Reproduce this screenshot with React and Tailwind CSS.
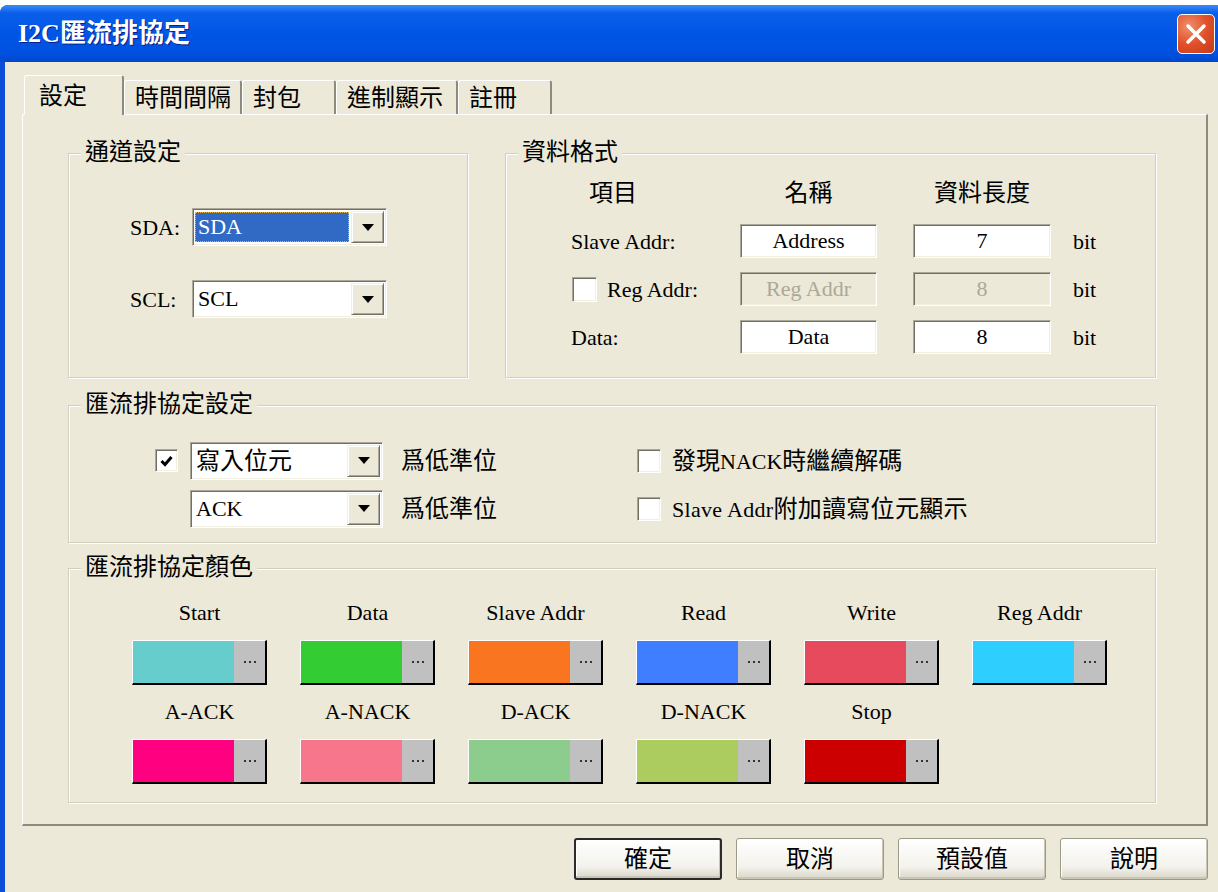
import React from 'react';

const sunken =
  'border border-t-[#ACA899] border-l-[#ACA899] border-b-white border-r-white shadow-[inset_1px_1px_0_#716F64,inset_-1px_-1px_0_#F1EFE2]';
const raised =
  'border border-t-[#F1EFE2] border-l-[#F1EFE2] border-b-[#716F64] border-r-[#716F64] shadow-[inset_1px_1px_0_#fff,inset_-1px_-1px_0_#ACA899]';

const C = ({ children }) => <span className="text-[24px]">{children}</span>;

const Group = ({ title, className, children }) => (
  <div className={`relative border border-[#D0D0BF] shadow-[inset_1px_1px_0_#fff,1px_1px_0_#fff] ${className}`}>
    <span className="absolute -top-[15px] left-[12px] bg-[#ECE9D8] px-[4px] text-[24px] leading-[26px]">{title}</span>
    {children}
  </div>
);

const Combo = ({ children, selected, className = '' }) => (
  <div className={`flex h-[38px] bg-white p-[2px] ${sunken} ${className}`}>
    <div
      className={`flex flex-1 items-center pl-[3px] leading-none ${
        selected ? 'mr-[2px] my-[1px] bg-[#316AC5] text-white outline-1 outline-dotted outline-[#E8B84A] -outline-offset-1' : ''
      }`}
    >
      {children}
    </div>
    <div className={`flex w-[33px] items-center justify-center bg-[#ECE9D8] ${raised}`}>
      <svg width="12" height="7" viewBox="0 0 12 7">
        <path d="M0 0h12L6 7z" fill="#000" />
      </svg>
    </div>
  </div>
);

const Field = ({ children, disabled, className = '' }) => (
  <div
    className={`flex h-full items-center justify-center leading-none ${sunken} ${
      disabled ? 'bg-[#ECE9D8] text-[#ACA899]' : 'bg-white'
    } ${className}`}
  >
    {children}
  </div>
);

const Check = ({ checked, className = '' }) => (
  <div className={`flex items-center justify-center bg-white ${sunken} ${className}`}>
    {checked && (
      <svg width="13" height="12" viewBox="0 0 13 12">
        <path d="M1.5 6 L5 9.5 L11.5 2" stroke="#000" strokeWidth="3" fill="none" />
      </svg>
    )}
  </div>
);

const colors = [
  { name: 'Start', color: 'bg-[#66CCCC]' },
  { name: 'Data', color: 'bg-[#33CC33]' },
  { name: 'Slave Addr', color: 'bg-[#F97520]' },
  { name: 'Read', color: 'bg-[#3F7FFF]' },
  { name: 'Write', color: 'bg-[#E64A5C]' },
  { name: 'Reg Addr', color: 'bg-[#2ECFFF]' },
  { name: 'A-ACK', color: 'bg-[#FF0080]' },
  { name: 'A-NACK', color: 'bg-[#F8768C]' },
  { name: 'D-ACK', color: 'bg-[#8CCC8C]' },
  { name: 'D-NACK', color: 'bg-[#ADCC60]' },
  { name: 'Stop', color: 'bg-[#CC0000]' },
];

const tabs = [
  { label: '時間間隔', w: 'w-[118px]' },
  { label: '封包', w: 'w-[94px]' },
  { label: '進制顯示', w: 'w-[122px]' },
  { label: '註冊', w: 'w-[94px]' },
];

const buttons = ['確定', '取消', '預設值', '說明'];

export default function App() {
  return (
    <div className="h-[892px] w-[1218px] overflow-hidden bg-white font-['Liberation_Serif','Noto_Sans_CJK_TC',serif] text-[22px] text-black">
      <div className="mt-[5px] flex h-[887px] flex-col overflow-hidden rounded-tl-[8px] bg-[#0B4FD9]">
        {/* title bar */}
        <div className="flex h-[57px] items-center justify-between bg-[linear-gradient(to_bottom,#3A8CF7_0%,#0A5FEA_14%,#0055E5_50%,#0051E0_86%,#0046CC_100%)] pl-[18px] pr-[3px]">
          <span className="text-[26px] font-bold text-white [text-shadow:1px_1px_0_#0A1E8C]">I2C匯流排協定</span>
          <div className="flex h-[40px] w-[38px] items-center justify-center rounded-[5px] border border-white bg-[radial-gradient(circle_at_30%_30%,#F0906E,#E0502A_50%,#C43A18)]">
            <svg width="22" height="22" viewBox="0 0 22 22">
              <path d="M3 3 L19 19 M19 3 L3 19" stroke="#fff" strokeWidth="3.5" strokeLinecap="round" />
            </svg>
          </div>
        </div>

        <div className="ml-[5px] flex flex-1 flex-col bg-[#ECE9D8] pl-[17px] pr-[10px] pt-[13px]">
          {/* tabs */}
          <div className="flex h-[39px] items-end">
            <div className="relative z-10 -mb-px ml-[2px] flex h-[40px] w-[100px] items-center rounded-t-[3px] border-l border-r-2 border-t border-l-white border-r-[#8d8b7e] border-t-white bg-[#ECE9D8] pl-[14px] text-[24px]">
              設定
            </div>
            {tabs.map((t) => (
              <div
                key={t.label}
                className={`flex h-[34px] items-center rounded-t-[3px] border-l border-r-2 border-t border-l-white border-r-[#8d8b7e] border-t-white pl-[10px] text-[24px] ${t.w}`}
              >
                {t.label}
              </div>
            ))}
          </div>

          {/* pane */}
          <div className="flex h-[712px] flex-col border-b-2 border-l border-r-2 border-t border-b-[#8d8b7e] border-l-white border-r-[#8d8b7e] border-t-white pl-[45px] pr-[50px] pt-[38px]">
            <div className="flex h-[225px] gap-[37px]">
              <Group title="通道設定" className="w-[400px]">
                <div className="flex flex-col gap-[34px] pl-[61px] pt-[54px]">
                  <div className="flex items-center gap-[12px]">
                    <span className="w-[50px]">SDA:</span>
                    <Combo selected className="w-[195px]">SDA</Combo>
                  </div>
                  <div className="flex items-center gap-[12px]">
                    <span className="w-[50px]">SCL:</span>
                    <Combo className="w-[195px]">SCL</Combo>
                  </div>
                </div>
              </Group>

              <Group title="資料格式" className="flex-1">
                <div className="flex flex-col pl-[65px] pt-[26px]">
                  <div className="flex h-[26px] items-center text-[24px]">
                    <span className="w-[169px] pl-[18px]">項目</span>
                    <span className="w-[137px] text-center">名稱</span>
                    <span className="w-[36px]" />
                    <span className="w-[138px] text-center">資料長度</span>
                  </div>
                  <div className="mt-[18px] flex flex-col gap-[14px]">
                    <div className="flex h-[34px] items-center">
                      <span className="w-[169px]">Slave Addr:</span>
                      <Field className="w-[137px]">Address</Field>
                      <span className="w-[36px]" />
                      <Field className="w-[138px]">7</Field>
                      <span className="ml-[22px]">bit</span>
                    </div>
                    <div className="flex h-[34px] items-center">
                      <div className="flex w-[169px] items-center">
                        <Check className="ml-px h-[25px] w-[25px]" />
                        <span className="ml-[10px]">Reg Addr:</span>
                      </div>
                      <Field disabled className="w-[137px]">Reg Addr</Field>
                      <span className="w-[36px]" />
                      <Field disabled className="w-[138px]">8</Field>
                      <span className="ml-[22px]">bit</span>
                    </div>
                    <div className="flex h-[34px] items-center">
                      <span className="w-[169px]">Data:</span>
                      <Field className="w-[137px]">Data</Field>
                      <span className="w-[36px]" />
                      <Field className="w-[138px]">8</Field>
                      <span className="ml-[22px]">bit</span>
                    </div>
                  </div>
                </div>
              </Group>
            </div>

            <Group title="匯流排協定設定" className="mt-[27px] h-[138px]">
              <div className="flex pl-[86px] pt-[36px]">
                <div className="flex w-[482px] flex-col gap-[11px]">
                  <div className="flex h-[37px] items-center">
                    <Check checked className="h-[23px] w-[23px]" />
                    <Combo className="ml-[12px] h-[37px] w-[193px]">
                      <C>寫入位元</C>
                    </Combo>
                    <span className="ml-[18px] text-[24px]">爲低準位</span>
                  </div>
                  <div className="flex h-[37px] items-center">
                    <Combo className="ml-[35px] h-[37px] w-[193px]">ACK</Combo>
                    <span className="ml-[18px] text-[24px]">爲低準位</span>
                  </div>
                </div>
                <div className="flex flex-col gap-[11px]">
                  <div className="flex h-[37px] items-center">
                    <Check className="h-[24px] w-[24px]" />
                    <span className="ml-[11px]">
                      <C>發現</C>NACK<C>時繼續解碼</C>
                    </span>
                  </div>
                  <div className="flex h-[37px] items-center">
                    <Check className="h-[24px] w-[24px]" />
                    <span className="ml-[11px] tracking-[0.3px]">
                      Slave Addr<C>附加讀寫位元顯示</C>
                    </span>
                  </div>
                </div>
              </div>
            </Group>

            <Group title="匯流排協定顏色" className="mt-[25px] h-[235px]">
              <div className="grid grid-cols-[repeat(6,135px)] gap-x-[33px] gap-y-[16px] pl-[63px] pt-[33px]">
                {colors.map((c) => (
                  <div key={c.name} className="flex flex-col items-center gap-[16px]">
                    <span className="h-[22px] leading-[22px]">{c.name}</span>
                    <div className="flex h-[45px] w-[135px] border-b-2 border-l border-r-2 border-t border-b-black border-l-white border-r-black border-t-white">
                      <div className={`flex-1 ${c.color}`} />
                      <div className="flex w-[31px] items-center justify-center gap-[3px] bg-[#C0C0C0]">
                        <span className="h-[2px] w-[2px] bg-[#333]" />
                        <span className="h-[2px] w-[2px] bg-[#333]" />
                        <span className="h-[2px] w-[2px] bg-[#333]" />
                      </div>
                    </div>
                  </div>
                ))}
              </div>
            </Group>
          </div>

          {/* buttons */}
          <div className="mt-[12px] flex justify-end gap-[14px]">
            {buttons.map((b, i) => (
              <div
                key={b}
                className={`flex h-[42px] w-[148px] items-center justify-center rounded-[3px] bg-[linear-gradient(to_bottom,#FFFFFF,#F3F2EC_70%,#D9D6C8)] text-[24px] ${
                  i === 0 ? 'border-2 border-[#2A2A2A]' : 'border border-[#9A9886]'
                } shadow-[inset_-1px_-2px_0_#C9C6B6,inset_1px_1px_0_#fff]`}
              >
                {b}
              </div>
            ))}
          </div>
        </div>
      </div>
    </div>
  );
}
